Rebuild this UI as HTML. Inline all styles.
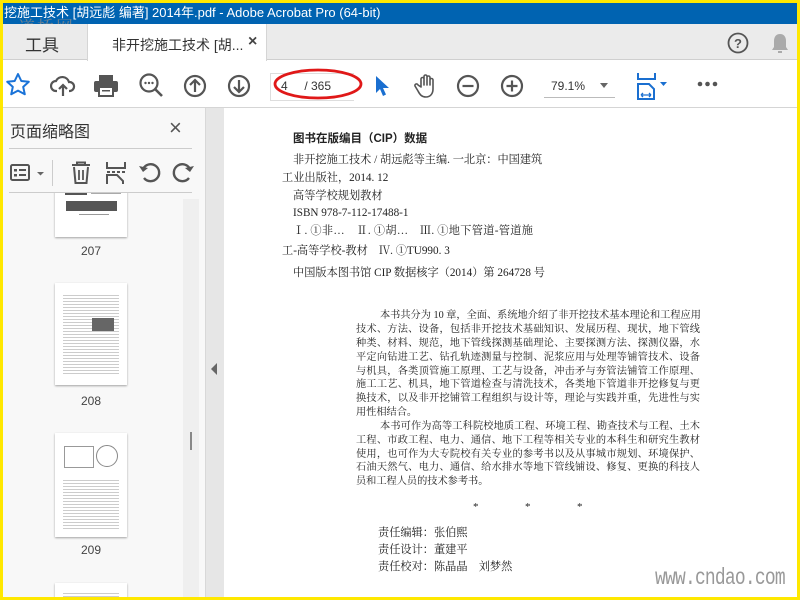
<!DOCTYPE html>
<html><head><meta charset="utf-8"><style>
*{margin:0;padding:0;box-sizing:border-box}
body{width:800px;height:600px;overflow:hidden;background:#fff;position:relative;font-family:"Liberation Sans","Noto Sans CJK SC",sans-serif}
.a{position:absolute}
.s{position:absolute;font-family:"Liberation Serif","Noto Serif CJK SC",serif;color:#222;font-size:11.2px;white-space:nowrap;line-height:14px}
.j{text-align:justify;text-align-last:justify}
.ln{position:absolute;left:356px;width:344px;font-family:"Liberation Serif","Noto Serif CJK SC",serif;font-size:10.2px;color:#222;white-space:nowrap;text-align:justify;text-align-last:justify;height:14px;line-height:14px}
svg{position:absolute}
.th{position:absolute;background:#fff;box-shadow:0 1px 2px rgba(0,0,0,.35)}
.tl{position:absolute;font-size:12px;color:#444;width:72px;text-align:center}
.y{position:absolute;background:#ffe800;z-index:9}
</style></head><body>
 <div class="a" style="left:0;top:3px;width:800px;height:21px;background:#0063b1;color:#fff;font-size:13px;line-height:19px;padding-left:4px;white-space:nowrap">挖施工技术 [胡远彪 编著] 2014年.pdf - Adobe Acrobat Pro (64-bit)</div>
 <div class="a" style="left:18px;top:13px;font-size:17px;color:#8a8a8a;letter-spacing:2px;font-family:'Noto Serif CJK SC',serif;opacity:.8">道桥网</div>
 <div class="a" style="left:0;top:24px;width:800px;height:36px;background:#ebebeb;border-bottom:1px solid #cfcfcf"></div>
 <div class="a" style="left:87px;top:24px;width:180px;height:37px;background:#fff;border-left:1px solid #d5d5d5;border-right:1px solid #d5d5d5"></div>
 <div class="a" style="left:25px;top:31px;font-size:17px;color:#333">工具</div>
 <div class="a" style="left:112px;top:35px;font-size:14px;color:#333;white-space:nowrap">非开挖施工技术 [胡...</div>
 <div class="a" style="left:248px;top:33px;font-size:16px;color:#444;font-weight:bold">×</div>
 <svg style="left:727px;top:32px" width="22" height="22"><circle cx="11" cy="11" r="9.5" fill="none" stroke="#555" stroke-width="1.8"/><text x="11" y="16" text-anchor="middle" font-size="13" font-weight="bold" fill="#555" font-family="Liberation Sans">?</text></svg>
 <svg style="left:770px;top:32px" width="20" height="22"><path d="M10 2c-4 0-6 3-6 7v6l-2 3h16l-2-3V9c0-4-2-7-6-7z" fill="#aaa"/><rect x="8" y="19" width="4" height="2" fill="#aaa"/></svg>
 <div class="a" style="left:0;top:107px;width:800px;height:1px;background:#d5d5d5"></div>
 <svg style="left:5px;top:72px" width="26" height="26"><path d="M13 2l3.3 7 7.5.8-5.6 5.1 1.6 7.4L13 18.6l-6.8 3.7 1.6-7.4L2.2 9.8 9.7 9z" fill="none" stroke="#1a73d8" stroke-width="2" stroke-linejoin="round"/></svg>
 <svg style="left:50px;top:74px" width="26" height="24"><path d="M7 17H6a5 5 0 010-10 7 7 0 0113 1 4.5 4.5 0 011 9h-1" fill="none" stroke="#555" stroke-width="2.2"/><path d="M13 22V11M9 15l4-4 4 4" fill="none" stroke="#555" stroke-width="2.2"/></svg>
 <svg style="left:93px;top:74px" width="26" height="24"><rect x="6" y="1" width="14" height="6" fill="#555"/><rect x="1" y="7" width="24" height="11" rx="2" fill="#555"/><rect x="6" y="13" width="14" height="9" fill="#fff" stroke="#555" stroke-width="2"/><rect x="9" y="16" width="8" height="1.5" fill="#555"/></svg>
 <svg style="left:139px;top:73px" width="26" height="26"><circle cx="10" cy="10" r="8.5" fill="none" stroke="#555" stroke-width="2.2"/><circle cx="6.5" cy="10" r="1.2" fill="#555"/><circle cx="10" cy="10" r="1.2" fill="#555"/><circle cx="13.5" cy="10" r="1.2" fill="#555"/><path d="M16 16l7 7" stroke="#555" stroke-width="2.6"/></svg>
 <svg style="left:183px;top:74px" width="24" height="24"><circle cx="12" cy="12" r="10" fill="none" stroke="#555" stroke-width="2.2"/><path d="M12 18V6M7 11l5-5 5 5" fill="none" stroke="#555" stroke-width="2.2"/></svg>
 <svg style="left:227px;top:74px" width="24" height="24"><circle cx="12" cy="12" r="10" fill="none" stroke="#555" stroke-width="2.2"/><path d="M12 6v12M7 13l5 5 5-5" fill="none" stroke="#555" stroke-width="2.2"/></svg>
 <div class="a" style="left:270px;top:73px;width:84px;height:28px;border:1px solid #ddd;border-right:none"></div>
 <div class="a" style="left:281px;top:79px;font-size:12px;color:#333">4&nbsp;&nbsp;&nbsp;&nbsp;&nbsp;/ 365</div>
 <svg style="left:271px;top:66px" width="96" height="38"><ellipse cx="47" cy="18" rx="43" ry="14" fill="none" stroke="#e01818" stroke-width="2.8"/></svg>
 <svg style="left:374px;top:75px" width="16" height="22"><path d="M2 1v17l4-4 3 7 3-1.5-3-6.5h6z" fill="#1a6fd0"/></svg>
 <svg style="left:414px;top:73px" width="26" height="26"><path d="M7 14V6a1.5 1.5 0 013 0v6V3.5a1.5 1.5 0 013 0V12V4.5a1.5 1.5 0 013 0V12V7a1.5 1.5 0 013 0v9c0 5-3 8-7 8s-6-2-8-6l-3-5a1.5 1.5 0 013-1z" fill="none" stroke="#555" stroke-width="1.6" stroke-linejoin="round"/></svg>
 <svg style="left:456px;top:74px" width="24" height="24"><circle cx="12" cy="12" r="10" fill="none" stroke="#555" stroke-width="2.2"/><path d="M6.5 12h11" stroke="#555" stroke-width="2.2"/></svg>
 <svg style="left:500px;top:74px" width="24" height="24"><circle cx="12" cy="12" r="10" fill="none" stroke="#555" stroke-width="2.2"/><path d="M6.5 12h11M12 6.5v11" stroke="#555" stroke-width="2.2"/></svg>
 <div class="a" style="left:551px;top:79px;font-size:12px;color:#333">79.1%</div>
 <div class="a" style="left:544px;top:97px;width:71px;height:1px;background:#bbb"></div>
 <svg style="left:600px;top:83px" width="10" height="6"><path d="M0 0h8l-4 5z" fill="#666"/></svg>
 <svg style="left:637px;top:72px" width="38" height="28"><path d="M1 1v6h17V1" fill="none" stroke="#1a6fd0" stroke-width="2"/><path d="M1 27V12h11l5 5v10z" fill="none" stroke="#1a6fd0" stroke-width="2"/><path d="M4 23h10M4 23l2-2M4 23l2 2M14 23l-2-2M14 23l-2 2" stroke="#1a6fd0" stroke-width="1.3"/><path d="M23 10h7l-3.5 4z" fill="#1a6fd0"/></svg>
 <svg style="left:697px;top:81px" width="22" height="6"><circle cx="3" cy="3" r="2.3" fill="#555"/><circle cx="10.5" cy="3" r="2.3" fill="#555"/><circle cx="18" cy="3" r="2.3" fill="#555"/></svg>
 <div class="a" style="left:0;top:108px;width:205px;height:492px;background:#f8f8f8"></div>
 <div class="a" style="left:183px;top:199px;width:16px;height:400px;background:#efefef"></div>
 <div class="a" style="left:190px;top:432px;width:2px;height:18px;background:#888"></div>
 <div class="a" style="left:205px;top:108px;width:1px;height:492px;background:#d8d8d8"></div>
 <div class="a" style="left:206px;top:108px;width:18px;height:492px;background:#e6e6e6"></div>
 <svg style="left:211px;top:363px" width="8" height="12"><path d="M6 0v12L0 6z" fill="#666"/></svg>
 <div class="a" style="left:10px;top:118px;font-size:16px;color:#333">页面缩略图</div>
 <div class="a" style="left:169px;top:115px;font-size:22px;color:#555">×</div>
 <div class="a" style="left:9px;top:148px;width:183px;height:1px;background:#ccc"></div>
 <div class="a" style="left:9px;top:192px;width:183px;height:1px;background:#ccc"></div>
 <svg style="left:10px;top:163px" width="40" height="20"><rect x="1" y="2" width="18" height="15" rx="1.5" fill="none" stroke="#555" stroke-width="2"/><rect x="4" y="6" width="3" height="2.5" fill="#555"/><rect x="4" y="11" width="3" height="2.5" fill="#555"/><path d="M9 7h7M9 12h7" stroke="#555" stroke-width="2"/><path d="M27 9h7l-3.5 3.5z" fill="#666"/></svg>
 <div class="a" style="left:52px;top:160px;width:1px;height:26px;background:#ccc"></div>
 <svg style="left:70px;top:161px" width="22" height="24"><path d="M2 4h18M7 4V1.5h8V4" fill="none" stroke="#555" stroke-width="2"/><path d="M4 6l1.5 16h11L18 6" fill="none" stroke="#555" stroke-width="2"/><path d="M9 9v10M13 9v10" stroke="#555" stroke-width="1.8"/></svg>
 <svg style="left:105px;top:161px" width="22" height="24"><path d="M2 1v6h18V1" fill="none" stroke="#555" stroke-width="2"/><path d="M2 11h3M7 11h3M12 11h3M17 11h3" stroke="#555" stroke-width="2"/><path d="M2 23v-9h10l6 6v3" fill="none" stroke="#555" stroke-width="2"/></svg>
 <svg style="left:138px;top:161px" width="24" height="24"><path d="M6 17a8.5 8.5 0 10-1-9" fill="none" stroke="#555" stroke-width="2.4"/><path d="M1 5l4 6 5-4z" fill="#555"/></svg>
 <svg style="left:171px;top:161px" width="24" height="24"><path d="M18 17a8.5 8.5 0 11 1-9" fill="none" stroke="#555" stroke-width="2.4"/><path d="M23 5l-4 6-5-4z" fill="#555"/></svg>
 <div class="a" style="left:0;top:193px;width:183px;height:407px;overflow:hidden">
 <div class="th" style="left:55px;top:-8px;width:72px;height:52px"><div class="a" style="left:10px;top:1px;width:22px;height:9px;background:#555"></div><div class="a" style="left:36px;top:2px;width:30px;height:8px;background:repeating-linear-gradient(#aaa 0 1px,#fff 1px 3px)"></div><div class="a" style="left:11px;top:16px;width:51px;height:10px;background:#555"></div><div class="a" style="left:24px;top:29px;width:30px;height:1px;background:#999"></div></div>
 <div class="tl" style="left:55px;top:51px">207</div>
 <div class="th" style="left:55px;top:90px;width:72px;height:102px;background:#fff repeating-linear-gradient(#fff 0 2px,#ccc 2px 3px) 8px 10px/56px 82px no-repeat"><div class="a" style="left:37px;top:35px;width:22px;height:13px;background:#666"></div></div>
 <div class="tl" style="left:55px;top:201px">208</div>
 <div class="th" style="left:55px;top:240px;width:72px;height:104px;background:#fff repeating-linear-gradient(#fff 0 2px,#ccc 2px 3px) 8px 45px/56px 52px no-repeat"><div class="a" style="left:9px;top:13px;width:30px;height:22px;border:1px solid #999"></div><div class="a" style="left:41px;top:12px;width:22px;height:22px;border:1px solid #888;border-radius:50%"></div></div>
 <div class="tl" style="left:55px;top:350px">209</div>
 <div class="th" style="left:55px;top:390px;width:72px;height:30px;background:#fff repeating-linear-gradient(#fff 0 2px,#ccc 2px 3px) 8px 8px/56px 20px no-repeat"></div>
 </div>
 <div class="a" style="left:293px;top:130px;font-size:11.5px;font-weight:bold;color:#222;font-family:'Liberation Sans','Noto Sans CJK SC',sans-serif;white-space:nowrap">图书在版编目（CIP）数据</div>
 <div class="s j" style="left:293px;top:153px;width:249px">非开挖施工技术 / 胡远彪等主编. 一北京：中国建筑</div>
 <div class="s" style="left:282px;top:171px">工业出版社，2014. 12</div>
 <div class="s" style="left:293px;top:189px">高等学校规划教材</div>
 <div class="s" style="left:293px;top:206px">ISBN 978-7-112-17488-1</div>
 <div class="s j" style="left:293px;top:224px;width:240px">Ⅰ. ①非…　Ⅱ. ①胡…　Ⅲ. ①地下管道-管道施</div>
 <div class="s" style="left:282px;top:244px">工-高等学校-教材　Ⅳ. ①TU990. 3</div>
 <div class="s j" style="left:293px;top:266px;width:248px">中国版本图书馆 CIP 数据核字（2014）第 264728 号</div>
 <div class="ln" style="left:380px;width:320px;top:309px">本书共分为 10 章，全面、系统地介绍了非开挖技术基本理论和工程应用</div>
 <div class="ln" style="top:323px">技术、方法、设备，包括非开挖技术基础知识、发展历程、现状，地下管线</div>
 <div class="ln" style="top:337px">种类、材料、规范，地下管线探测基础理论、主要探测方法、探测仪器，水</div>
 <div class="ln" style="top:351px">平定向钻进工艺、钻孔轨迹测量与控制、泥浆应用与处理等铺管技术、设备</div>
 <div class="ln" style="top:365px">与机具，各类顶管施工原理、工艺与设备，冲击矛与夯管法铺管工作原理、</div>
 <div class="ln" style="top:378px">施工工艺、机具，地下管道检查与清洗技术，各类地下管道非开挖修复与更</div>
 <div class="ln" style="top:392px">换技术，以及非开挖铺管工程组织与设计等，理论与实践并重，先进性与实</div>
 <div class="ln" style="top:406px;text-align-last:left">用性相结合。</div>
 <div class="ln" style="left:380px;width:320px;top:420px">本书可作为高等工科院校地质工程、环境工程、勘查技术与工程、土木</div>
 <div class="ln" style="top:434px">工程、市政工程、电力、通信、地下工程等相关专业的本科生和研究生教材</div>
 <div class="ln" style="top:448px">使用，也可作为大专院校有关专业的参考书以及从事城市规划、环境保护、</div>
 <div class="ln" style="top:461px">石油天然气、电力、通信、给水排水等地下管线铺设、修复、更换的科技人</div>
 <div class="ln" style="top:475px;text-align-last:left">员和工程人员的技术参考书。</div>
 <div class="s" style="left:473px;top:500px;font-size:11px">*</div>
 <div class="s" style="left:525px;top:500px;font-size:11px">*</div>
 <div class="s" style="left:577px;top:500px;font-size:11px">*</div>
 <div class="s" style="left:378px;top:526px">责任编辑：张伯熙</div>
 <div class="s" style="left:378px;top:543px">责任设计：董建平</div>
 <div class="s" style="left:378px;top:560px">责任校对：陈晶晶　刘梦然</div>
 <div class="a" style="left:655px;top:565px;font-family:'Liberation Mono',monospace;font-size:23px;color:#999;transform:scaleX(.78);transform-origin:left;white-space:nowrap;letter-spacing:-1px">www.cndao.com</div>
 <div class="y" style="left:0;top:0;width:800px;height:3px"></div>
 <div class="y" style="left:0;top:0;width:3px;height:600px"></div>
 <div class="y" style="left:797px;top:0;width:3px;height:600px"></div>
 <div class="y" style="left:0;top:597px;width:800px;height:3px"></div>
</body></html>
